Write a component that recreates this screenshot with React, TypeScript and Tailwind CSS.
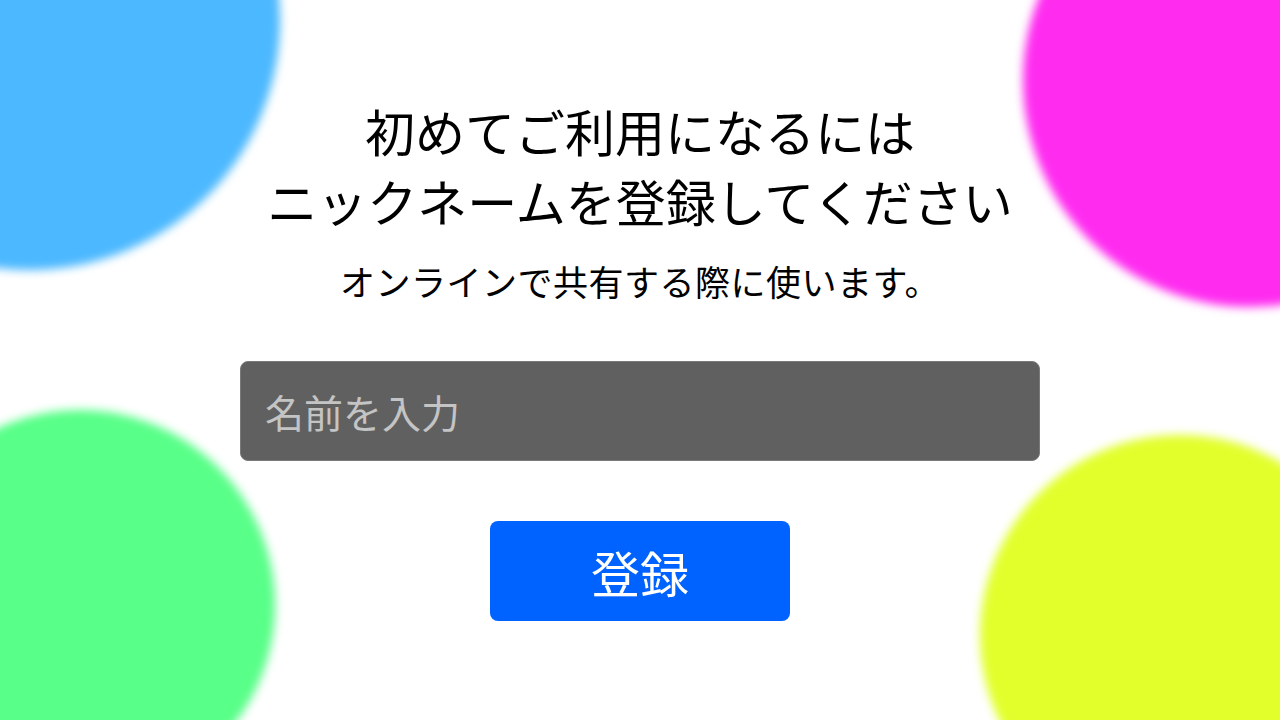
import React from 'react';

const font = "font-['Noto_Sans_CJK_JP','Noto_Sans',sans-serif]";

export default function App() {
  return (
    <div className={`relative w-[1280px] h-[720px] overflow-hidden bg-white ${font}`}>
      {/* ぼかした背景の円 */}
      <div className="absolute left-[-220px] top-[-230px] w-[500px] h-[500px] rounded-full bg-[#4cb8ff] blur-[5px]"></div>
      <div className="absolute left-[1023px] top-[-147px] w-[454px] h-[454px] rounded-full bg-[#ff2cf0] blur-[5px]"></div>
      <div className="absolute left-[-115px] top-[410px] w-[390px] h-[390px] rounded-full bg-[#58ff88] blur-[5px]"></div>
      <div className="absolute left-[980px] top-[435px] w-[400px] h-[400px] rounded-full bg-[#e2ff2c] blur-[5px]"></div>

      <div className="relative z-10 flex flex-col items-center pt-[95px]">
        <h1 className="text-[50px] leading-[70px] font-normal text-black text-center">
          初めてご利用になるには
          <br />
          ニックネームを登録してください
        </h1>
        <p className="mt-[22px] text-[35px] leading-[48px] text-black tracking-[0.5px]">
          オンラインで共有する際に使います。
        </p>
        <input
          type="text"
          placeholder="名前を入力"
          className="mt-[56px] w-[800px] h-[100px] rounded-[8px] bg-[#606060] border border-[#7a7a7a] px-[24px] text-[39px] text-white placeholder:text-[#c4c4c4] outline-none"
        />
        <button className="mt-[60px] w-[300px] h-[100px] rounded-[8px] bg-[#0062ff] text-white text-[49px] leading-none">
          登録
        </button>
      </div>
    </div>
  );
}
